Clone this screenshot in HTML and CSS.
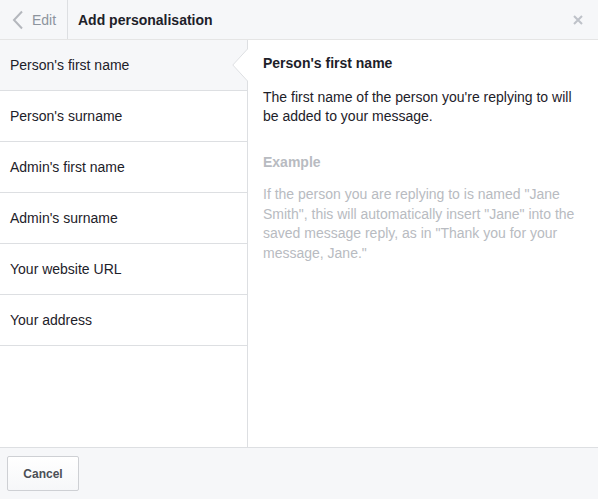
FILE: index.html
```html
<!DOCTYPE html>
<html>
<head>
<meta charset="utf-8">
<link rel="stylesheet" href="styles.css">
</head>
<body>
<div class="dialog">
  <div class="header">
    <div class="back">
      <svg class="chev" width="12" height="20" viewBox="0 0 12 20"><polyline points="10,1.5 2,10 10,18.5" fill="none" stroke="#b4b7bd" stroke-width="2"/></svg>
      <span>Edit</span>
    </div>
    <div class="title">Add personalisation</div>
    <div class="close">
      <svg width="10" height="10" viewBox="0 0 10 10"><path d="M1 1L9 9M9 1L1 9" stroke="#bec2c9" stroke-width="2"/></svg>
    </div>
  </div>
  <div class="body">
    <div class="list">
      <div class="row selected">Person's first name
        <svg class="pointer" width="16" height="32" viewBox="0 0 16 32"><polygon points="16,0 15.5,0 0.5,16 15.5,32 16,32" fill="#fff"/><polyline points="15.5,0 0.8,16 15.5,32" fill="none" stroke="#dddfe2" stroke-width="1"/></svg>
      </div>
      <div class="row">Person's surname</div>
      <div class="row">Admin's first name</div>
      <div class="row">Admin's surname</div>
      <div class="row">Your website URL</div>
      <div class="row">Your address</div>
    </div>
    <div class="detail">
      <div class="d-title">Person's first name</div>
      <div class="d-text">The first name of the person you're replying to will be added to your message.</div>
      <div class="ex-title">Example</div>
      <div class="ex-text">If the person you are replying to is named "Jane Smith", this will automatically insert "Jane" into the saved message reply, as in "Thank you for your message, Jane."</div>
    </div>
  </div>
  <div class="footer">
    <button class="cancel">Cancel</button>
  </div>
</div>
</body>
</html>
```

FILE: styles.css
```css
html, body {
  margin: 0;
  padding: 0;
  background: #fff;
}
body {
  font-family: "Liberation Sans", Arial, Helvetica, sans-serif;
  font-size: 14px;
  color: #1d2129;
}
.dialog {
  width: 598px;
  height: 499px;
  display: flex;
  flex-direction: column;
}
.header {
  height: 39px;
  flex: none;
  display: flex;
  align-items: stretch;
  background: #f6f7f9;
  border-bottom: 1px solid #e5e5e5;
}
.back {
  border-right: 1px solid #dddfe2;
  display: flex;
  align-items: center;
  box-sizing: border-box;
  width: 68px;
  padding-left: 12px;
  color: #8d949e;
}
.chev {
  display: block;
  margin-right: 8px;
  margin-top: 1px;
}
.title {
  flex: 1;
  display: flex;
  align-items: center;
  padding-left: 10px;
  font-weight: bold;
}
.close {
  width: 40px;
  display: flex;
  align-items: center;
  justify-content: center;
  padding-left: 1px;
}
.body {
  flex: 1;
  display: flex;
  min-height: 0;
}
.list {
  width: 247px;
  flex: none;
  border-right: 1px solid #dddfe2;
}
.row {
  position: relative;
  line-height: 18px;
  padding: 16px 10px;
  box-sizing: border-box;
  height: 51px;
  border-bottom: 1px solid #dddfe2;
}
.row.selected {
  background: #f6f7f9;
}
.pointer {
  position: absolute;
  right: -1px;
  top: 9px;
}
.detail {
  flex: 1;
  padding: 14px 20px 0 15px;
}
.d-title {
  font-weight: bold;
  line-height: 18px;
}
.d-text {
  margin-top: 16px;
  line-height: 19px;
}
.ex-title {
  margin-top: 27px;
  font-weight: bold;
  line-height: 18px;
  color: #b8bbc1;
}
.ex-text {
  margin-top: 14px;
  line-height: 19.7px;
  color: #b8bbc1;
}
.footer {
  height: 52px;
  flex: none;
  border-top: 1px solid #dddfe2;
  background: #f6f7f9;
  display: flex;
  align-items: flex-start;
  padding: 8px 0 0 7px;
  box-sizing: border-box;
}
.cancel {
  width: 72px;
  height: 35px;
  border: 1px solid #ced0d4;
  border-radius: 2px;
  background: linear-gradient(#fff, #f6f7f9);
  font-family: "Liberation Sans", Arial, Helvetica, sans-serif;
  font-size: 12px;
  font-weight: bold;
  color: #4b4f56;
  padding: 0;
}
```
